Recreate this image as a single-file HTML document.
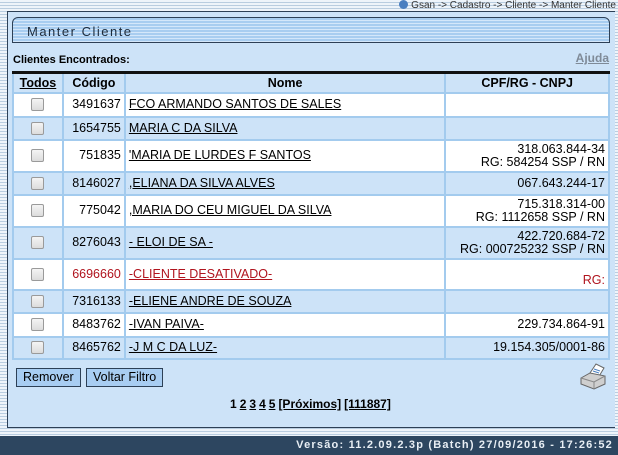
<!DOCTYPE html>
<html><head><meta charset="utf-8"><style>
*{margin:0;padding:0;box-sizing:border-box}
body{width:618px;height:455px;overflow:hidden;position:relative;font-family:"Liberation Sans",Arial,sans-serif;font-size:12px;color:#000;
background:repeating-linear-gradient(#eef4fa 0 2px,#b9cde0 2px 3px);}
.bc{position:absolute;right:2px;top:0;font-size:10px;color:#333;line-height:11px}
.bc i{display:inline-block;width:9px;height:9px;border-radius:50%;background:#4a7fc0;vertical-align:-1px;margin-right:3px}
.panel{position:absolute;left:7px;top:11px;width:608px;height:417px;background:#cde3f8;border:1px solid #2d4056;border-right:0}
.title{position:absolute;left:12px;top:17px;width:598px;height:26px;border:1px solid #2d4056;border-radius:6px 6px 0 0;
background:repeating-linear-gradient(#a8cdf0 0 2px,#d4e7fa 2px 3px);font-size:13px;letter-spacing:1.5px;color:#1c2b3c;padding:6px 0 0 14px}
.lbl{position:absolute;left:13px;top:54px;font-weight:bold;font-size:11px}
.aj{position:absolute;right:9px;top:51px;font-weight:bold;color:#7f8a97;text-decoration:underline;font-size:12px}
table{position:absolute;left:12px;top:71px;width:598px;border-collapse:collapse;border-top:3px solid #111;font-size:12.5px}
td{border:2px solid #a3cbee;padding:0 3px;line-height:13px}
tr.w td{background:#fff}tr.b td{background:#cde3f8}
th{font-weight:bold;height:20px;background:#cde3f8;border:2px solid #a3cbee;border-top:0}
td.c{text-align:center}td.r{text-align:right}
td.n a{color:#000;text-decoration:underline}
.cb{display:inline-block;width:13px;height:13px;border:1px solid #9a9a9a;border-radius:2px;background:linear-gradient(#f4f4f4,#dcdcdc);vertical-align:middle}
.red,.red a{color:#b0141e!important}
.btn{position:absolute;top:368px;height:19px;background:#a8cdf2;border:1px solid #2d4056;font-size:12.5px;line-height:17px;padding:0 6px}
.pg{position:absolute;top:397px;left:230px;font-weight:bold;font-size:12px}
.pg u{margin-left:3px}
.foot{position:absolute;left:0;top:436px;width:618px;height:19px;background:#2d4660;color:#e8eef4;font-family:"Liberation Sans",Arial,sans-serif;font-weight:bold;font-size:11px;text-align:right;padding:3px 5px 0 0;letter-spacing:1.2px}
</style></head><body>
<div class="bc"><i></i>Gsan -&gt; Cadastro -&gt; Cliente -&gt; Manter Cliente</div>
<div class="panel"></div>
<div class="title">Manter Cliente</div>
<div class="lbl">Clientes Encontrados:</div>
<div class="aj">Ajuda</div>
<table>
<colgroup><col style="width:50px"><col style="width:62px"><col style="width:322px"><col style="width:164px"></colgroup>
<tr><th><u>Todos</u></th><th>Código</th><th>Nome</th><th>CPF/RG - CNPJ</th></tr>
<tr class="w" style="height:24px"><td class="c"><span class="cb"></span></td><td class="r">3491637</td><td class="n"><a>FCO ARMANDO SANTOS DE SALES</a></td><td></td></tr>
<tr class="b" style="height:23px"><td class="c"><span class="cb"></span></td><td class="r">1654755</td><td class="n"><a>MARIA C DA SILVA</a></td><td></td></tr>
<tr class="w" style="height:32px"><td class="c"><span class="cb"></span></td><td class="r">751835</td><td class="n"><a>'MARIA DE LURDES F SANTOS</a></td><td class="r">318.063.844-34<br>RG: 584254 SSP / RN</td></tr>
<tr class="b" style="height:23px"><td class="c"><span class="cb"></span></td><td class="r">8146027</td><td class="n"><a>,ELIANA DA SILVA ALVES</a></td><td class="r">067.643.244-17</td></tr>
<tr class="w" style="height:32px"><td class="c"><span class="cb"></span></td><td class="r">775042</td><td class="n"><a>,MARIA DO CEU MIGUEL DA SILVA</a></td><td class="r">715.318.314-00<br>RG: 1112658 SSP / RN</td></tr>
<tr class="b" style="height:32px"><td class="c"><span class="cb"></span></td><td class="r">8276043</td><td class="n"><a>- ELOI DE SA -</a></td><td class="r">422.720.684-72<br>RG: 000725232 SSP / RN</td></tr>
<tr class="w" style="height:31px"><td class="c"><span class="cb"></span></td><td class="r red">6696660</td><td class="n red"><a>-CLIENTE DESATIVADO-</a></td><td class="r red" style="vertical-align:bottom;padding-bottom:2px">RG:</td></tr>
<tr class="b" style="height:23px"><td class="c"><span class="cb"></span></td><td class="r">7316133</td><td class="n"><a>-ELIENE ANDRE DE SOUZA</a></td><td></td></tr>
<tr class="w" style="height:24px"><td class="c"><span class="cb"></span></td><td class="r">8483762</td><td class="n"><a>-IVAN PAIVA-</a></td><td class="r">229.734.864-91</td></tr>
<tr class="b" style="height:22px"><td class="c"><span class="cb"></span></td><td class="r">8465762</td><td class="n"><a>-J M C DA LUZ-</a></td><td class="r">19.154.305/0001-86</td></tr>
</table>
<div class="btn" style="left:16px">Remover</div>
<div class="btn" style="left:86px">Voltar Filtro</div>
<svg style="position:absolute;left:578px;top:362px" width="30" height="28" viewBox="0 0 30 28">
<polygon points="10,14 18,2 26,6 20,16" fill="#fff" stroke="#666"/>
<line x1="16" y1="7" x2="22" y2="9" stroke="#4a7fc0"/><line x1="15" y1="9" x2="21" y2="11" stroke="#4a7fc0"/>
<path d="M3 16 L12 11 L27 14 L27 22 L16 27 L3 22 Z" fill="#cfcfcf" stroke="#666"/>
<path d="M3 16 L16 20 L27 14" fill="none" stroke="#888"/><path d="M16 20 L16 27" stroke="#888"/>
</svg>
<div class="pg">1<u>2</u><u>3</u><u>4</u><u>5</u><u>[Próximos]</u><u>[111887]</u></div>
<div class="foot">Versão: 11.2.09.2.3p (Batch) 27/09/2016 - 17:26:52</div>
</body></html>
